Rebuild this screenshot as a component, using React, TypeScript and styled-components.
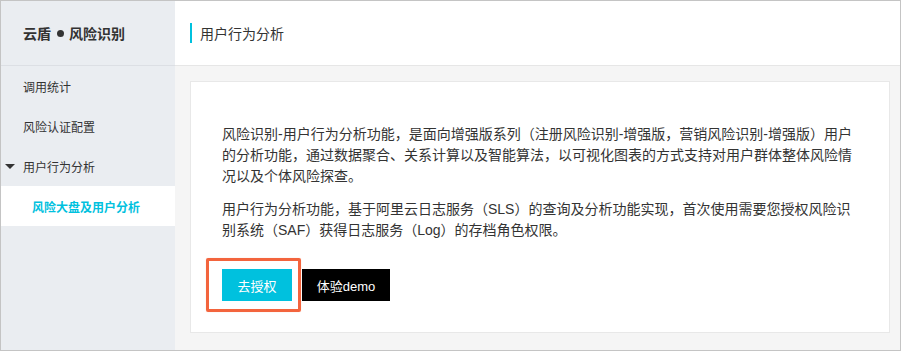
import React from "react";
import styled, { createGlobalStyle } from "styled-components";

const Global = createGlobalStyle`
  html, body { margin: 0; padding: 0; background: #fff; }
  body { font-family: "Liberation Sans", "Noto Sans CJK SC", sans-serif; }
  * { box-sizing: border-box; }
`;

const Frame = styled.div`
  width: 901px;
  height: 351px;
  border: 1px solid #c4c4c4;
  display: flex;
  overflow: hidden;
`;

const Sidebar = styled.aside`
  width: 174px;
  flex: none;
  background: #eaedf1;
  display: flex;
  flex-direction: column;
`;

const Brand = styled.div`
  height: 65px;
  border-bottom: 1px solid #dcdfe4;
  display: flex;
  align-items: center;
  padding-left: 22px;
  font-size: 14px;
  font-weight: bold;
  color: #333;
`;

const Dot = styled.span`
  display: inline-block;
  width: 7px;
  height: 7px;
  border-radius: 50%;
  background: #333;
  margin: 0 5px 0 6px;
`;

const MenuItem = styled.div<{ $active?: boolean; $indent?: boolean }>`
  height: 40px;
  display: flex;
  align-items: center;
  padding-left: ${(p) => (p.$indent ? "31px" : "22px")};
  font-size: 12px;
  color: ${(p) => (p.$active ? "#00c1de" : "#333")};
  font-weight: ${(p) => (p.$active ? "bold" : "normal")};
  background: ${(p) => (p.$active ? "#fff" : "transparent")};
  position: relative;
`;

const Caret = styled.span`
  position: absolute;
  left: 4px;
  top: 18px;
  width: 0;
  height: 0;
  border-left: 5px solid transparent;
  border-right: 5px solid transparent;
  border-top: 5px solid #333;
`;

const Main = styled.main`
  flex: 1;
  display: flex;
  flex-direction: column;
  background: #f5f5f5;
`;

const Header = styled.header`
  height: 65px;
  flex: none;
  background: #fff;
  border-bottom: 1px solid #e6e6e6;
  display: flex;
  align-items: center;
  padding-left: 15px;
`;

const Title = styled.h1`
  margin: 0;
  height: 20px;
  border-left: 2px solid #00c1de;
  padding-left: 8px;
  display: flex;
  align-items: center;
  font-size: 14px;
  font-weight: normal;
  color: #333;
`;

const Content = styled.div`
  padding: 15px 10px 0 15px;
`;

const Card = styled.section`
  width: 700px;
  height: 252px;
  background: #fff;
  border: 1px solid #e8e8e8;
  padding: 42px 31px 0 31px;
`;

const Para = styled.p`
  margin: 0 0 12px;
  font-size: 14px;
  line-height: 21px;
  color: #333;
`;

const Actions = styled.div`
  margin-top: 28px;
  display: flex;
  gap: 10px;
`;

const Highlight = styled.div`
  position: relative;
`;

const Ring = styled.span`
  position: absolute;
  left: -16px;
  top: -11px;
  width: 95px;
  height: 54px;
  border: 3px solid #f3643d;
  border-radius: 2px;
  box-shadow: 0 0 1px rgba(243, 100, 61, 0.4);
  pointer-events: none;
`;

const Button = styled.button<{ $variant: "primary" | "dark" }>`
  height: 32px;
  padding: 0;
  width: ${(p) => (p.$variant === "primary" ? "70px" : "88px")};
  border: none;
  background: ${(p) => (p.$variant === "primary" ? "#00c1de" : "#000")};
  color: #fff;
  font-family: inherit;
  font-size: 13px;
  cursor: pointer;
`;

export default function App() {
  return (
    <>
      <Global />
      <Frame>
        <Sidebar>
          <Brand>
            云盾<Dot />风险识别
          </Brand>
          <MenuItem>调用统计</MenuItem>
          <MenuItem>风险认证配置</MenuItem>
          <MenuItem>
            <Caret />
            用户行为分析
          </MenuItem>
          <MenuItem $active $indent>
            风险大盘及用户分析
          </MenuItem>
        </Sidebar>
        <Main>
          <Header>
            <Title>用户行为分析</Title>
          </Header>
          <Content>
            <Card>
              <Para>
                风险识别-用户行为分析功能，是面向增强版系列（注册风险识别-增强版，营销风险识别-增强版）用户的分析功能，通过数据聚合、关系计算以及智能算法，以可视化图表的方式支持对用户群体整体风险情况以及个体风险探查。
              </Para>
              <Para>
                用户行为分析功能，基于阿里云日志服务（SLS）的查询及分析功能实现，首次使用需要您授权风险识别系统（SAF）获得日志服务（Log）的存档角色权限。
              </Para>
              <Actions>
                <Highlight>
                  <Ring />
                  <Button $variant="primary">去授权</Button>
                </Highlight>
                <Button $variant="dark">体验demo</Button>
              </Actions>
            </Card>
          </Content>
        </Main>
      </Frame>
    </>
  );
}
